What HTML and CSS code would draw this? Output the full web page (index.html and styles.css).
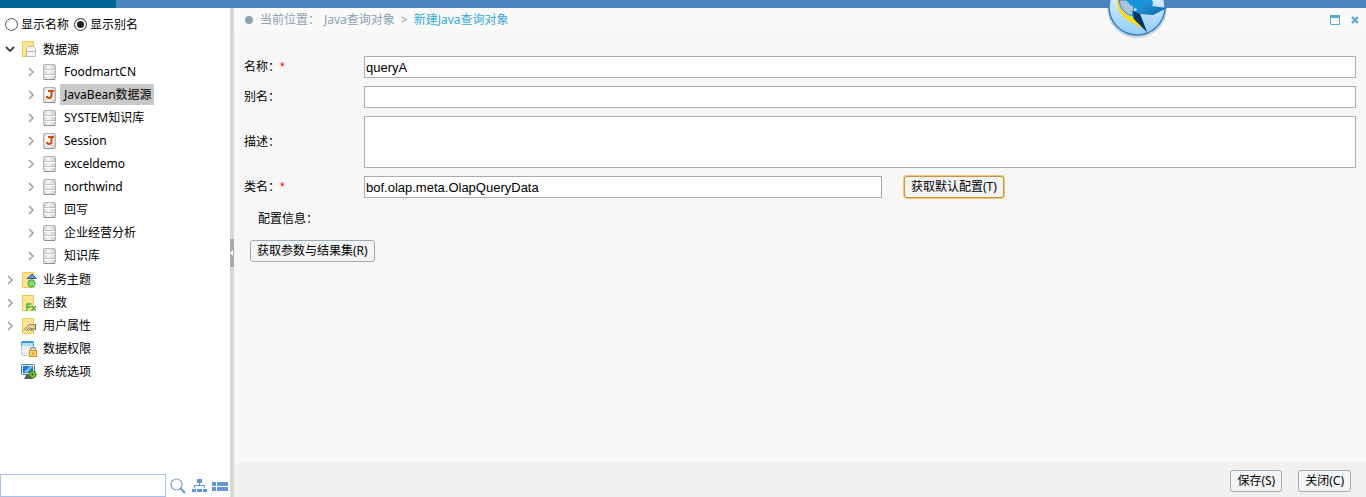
FILE: index.html
```
<!DOCTYPE html>
<html lang="zh-CN">
<head>
    <meta charset="UTF-8">
    <meta name="viewport" content="width=device-width, initial-scale=1.0">
    <title>新建Java查询对象</title>
    <link rel="stylesheet" href="styles.css">
</head>
<body>
    <!-- shared icons -->
    <svg class="icon-defs" aria-hidden="true">
        <defs>
            <linearGradient id="metal" x1="0" x2="1" y1="0" y2="0">
                <stop offset="0" stop-color="#cfcfcf"/>
                <stop offset="0.4" stop-color="#f7f7f7"/>
                <stop offset="1" stop-color="#cccccc"/>
            </linearGradient>
            <linearGradient id="sky" x1="0" x2="0" y1="0" y2="1">
                <stop offset="0" stop-color="#f4fbff"/>
                <stop offset="1" stop-color="#93cbf8"/>
            </linearGradient>
            <linearGradient id="wing" x1="0" x2="1" y1="0" y2="1">
                <stop offset="0" stop-color="#2ea4ea"/>
                <stop offset="1" stop-color="#00488e"/>
            </linearGradient>
        </defs>
        <symbol id="i-arrow" viewBox="0 0 10 10">
            <path d="M3 1 L7 5 L3 9" fill="none" stroke="#a5a5a5" stroke-width="1.7"/>
        </symbol>
        <symbol id="i-arrow-open" viewBox="0 0 10 10">
            <path d="M1 3 L5 7 L9 3" fill="none" stroke="#444" stroke-width="1.9"/>
        </symbol>
        <symbol id="i-db" viewBox="0 0 16 16">
            <rect x="1.5" y="0.5" width="12" height="15" rx="1.5" fill="url(#metal)" stroke="#b4b4b4"/>
            <path d="M2 5.5h11M2 10.5h11" stroke="#c4c4c4"/>
            <path d="M2 6.5h11M2 11.5h11" stroke="#fff"/>
            <path d="M2 15.5h11" stroke="#8e8e8e"/>
        </symbol>
        <symbol id="i-java" viewBox="0 0 16 16">
            <rect x="1.5" y="0.5" width="12" height="15" rx="1.5" fill="url(#metal)" stroke="#b4b4b4"/>
            <path d="M3 3h9v9H3z" fill="#f8f6f5"/>
            <path d="M2 15.5h11" stroke="#8e8e8e"/>
            <path d="M6 4h6M9.5 4v4.5q0 2.500-2.500 2.500q-2 0-2-2" fill="none" stroke="#cc4a0c" stroke-width="2"/>
        </symbol>
        <symbol id="i-folder" viewBox="0 0 16 16">
            <path d="M1.5 0.5h11v15h-11z" fill="#fde494" stroke="#efca4d"/>
        </symbol>
    </svg>

    <header class="topbar">
        <div class="topbar-active"></div>
        <svg class="logo" viewBox="0 0 64 40" aria-hidden="true">
            <ellipse cx="31" cy="8" rx="30" ry="30" fill="#6587a7" opacity="0.3"/>
            <circle cx="31" cy="7" r="28" fill="url(#sky)" stroke="#3c7fb9" stroke-width="1.500"/>
            <path d="M13 0Q13 10 21 15L31 19Q35 25 35 29Q30 24 23 21Q11 14 11 0Z" fill="#ffda08"/>
            <path d="M13 0Q14 12 26 16L28 6L20 0Z" fill="#a9c6e0" stroke="#3979b4"/>
            <path d="M20 0Q27 9 38 12Q50 6 46 0Z" fill="#1595de"/>
            <path d="M26 12Q34 10 38 1L46 6L61 8L47 15L34 14L41 32L27 18Z" fill="url(#wing)"/>
            <path d="M27 11L34 14L41 32L28 19Z" fill="#073662"/>
        </svg>
    </header>

    <div class="workspace">
        <aside class="sidebar">
            <div class="name-mode">
                <input type="radio" name="mode" id="mode-name"><label for="mode-name">显示名称</label>
                <input type="radio" name="mode" id="mode-alias" checked><label for="mode-alias">显示别名</label>
            </div>

            <ul class="tree">
                <li>
                    <div class="node root">
                        <svg class="arrow-open"><use href="#i-arrow-open"/></svg>
                        <svg class="icon" viewBox="0 0 16 16">
                            <use href="#i-folder"/>
                            <path d="M5.500 7.500L7.500 5.500h5l2 2v8h-9z" fill="#f5f5f5" stroke="#bbb"/>
                            <path d="M6 10.500h8" stroke="#bbb"/>
                        </svg>
                        <span class="text">数据源</span>
                    </div>
                    <ul>
                        <li class="node"><svg class="arrow"><use href="#i-arrow"/></svg><svg class="icon"><use href="#i-db"/></svg><span class="text">FoodmartCN</span></li>
                        <li class="node"><svg class="arrow"><use href="#i-arrow"/></svg><svg class="icon"><use href="#i-java"/></svg><span class="text selected">JavaBean数据源</span></li>
                        <li class="node"><svg class="arrow"><use href="#i-arrow"/></svg><svg class="icon"><use href="#i-db"/></svg><span class="text">SYSTEM知识库</span></li>
                        <li class="node"><svg class="arrow"><use href="#i-arrow"/></svg><svg class="icon"><use href="#i-java"/></svg><span class="text">Session</span></li>
                        <li class="node"><svg class="arrow"><use href="#i-arrow"/></svg><svg class="icon"><use href="#i-db"/></svg><span class="text">exceldemo</span></li>
                        <li class="node"><svg class="arrow"><use href="#i-arrow"/></svg><svg class="icon"><use href="#i-db"/></svg><span class="text">northwind</span></li>
                        <li class="node"><svg class="arrow"><use href="#i-arrow"/></svg><svg class="icon"><use href="#i-db"/></svg><span class="text">回写</span></li>
                        <li class="node"><svg class="arrow"><use href="#i-arrow"/></svg><svg class="icon"><use href="#i-db"/></svg><span class="text">企业经营分析</span></li>
                        <li class="node"><svg class="arrow"><use href="#i-arrow"/></svg><svg class="icon"><use href="#i-db"/></svg><span class="text">知识库</span></li>
                    </ul>
                </li>
                <li class="node">
                    <svg class="arrow"><use href="#i-arrow"/></svg>
                    <svg class="icon" viewBox="0 0 16 16">
                        <use href="#i-folder"/>
                        <path d="M6 6.500L11 2L15.500 6.500z" fill="#6290df" stroke="#3457a0"/>
                        <circle cx="10.500" cy="11.500" r="3.700" fill="#80d96b" stroke="#4aa03c"/>
                    </svg>
                    <span class="text">业务主题</span>
                </li>
                <li class="node">
                    <svg class="arrow"><use href="#i-arrow"/></svg>
                    <svg class="icon" viewBox="0 0 16 16">
                        <use href="#i-folder"/>
                        <path d="M6 15.500V9h4.500M6 12h4M10.500 11l4.500 4.500M15 11l-4.500 4.500" fill="none" stroke="#3aae35" stroke-width="1.500"/>
                    </svg>
                    <span class="text">函数</span>
                </li>
                <li class="node">
                    <svg class="arrow"><use href="#i-arrow"/></svg>
                    <svg class="icon" viewBox="0 0 16 16">
                        <use href="#i-folder"/>
                        <path d="M3 12l5-5h6v4l-4 1z" fill="#f4d08a"/>
                        <path d="M2.500 12.500L8 6.500h6M5 13l3.500-3.500L13 13M7 13l2-2 2 2M10 10.500l4 .5" fill="none" stroke="#8a8770"/>
                        <path d="M14.500 6v6" stroke="#47733a"/>
                    </svg>
                    <span class="text">用户属性</span>
                </li>
                <li class="node leaf">
                    <svg class="icon" viewBox="0 0 16 16">
                        <rect x="0.500" y="0.500" width="12" height="14" rx="1" fill="#e9ebee" stroke="#c5c8cc"/>
                        <path d="M0 1.500Q0 0 2 0h9q2 0 2 1.500V5H0z" fill="#3c94e8"/>
                        <path d="M1 3.500h11" stroke="#b5ddff" stroke-width="3"/>
                        <path d="M0 10h12M6.500 6v9" stroke="#fff"/>
                        <path d="M9.500 10V8q0-1.500 2.500-1.500T14.500 8v2" fill="none" stroke="#999" stroke-width="1.300"/>
                        <rect x="8.500" y="9.500" width="7" height="6" fill="#fbd25a" stroke="#d2942b"/>
                        <path d="M12 11.500v2" stroke="#9a6a15"/>
                    </svg>
                    <span class="text">数据权限</span>
                </li>
                <li class="node leaf">
                    <svg class="icon" viewBox="0 0 16 16">
                        <rect x="0.500" y="0.500" width="13" height="10" rx="1" fill="#dce8f2" stroke="#57799b"/>
                        <path d="M2 2h10v7H2z" fill="#147fd5"/>
                        <path d="M3 8l6-6h3L6 9z" fill="#76c2f5"/>
                        <path d="M5 11h4v2h2v2H3z" fill="#56636e"/>
                        <path d="M11.500 6v9M7 10.500h9M8.500 7.500l6 6M14.500 7.500l-6 6" stroke="#4c9412" stroke-width="1.500"/>
                        <circle cx="11.500" cy="10.500" r="3" fill="#9bd936" stroke="#397911"/>
                        <circle cx="11.500" cy="10.500" r="1.200" fill="#285b0c"/>
                    </svg>
                    <span class="text">系统选项</span>
                </li>
            </ul>

            <div class="search">
                <input type="text" aria-label="搜索">
                <button type="button" aria-label="查找">
                    <svg viewBox="0 0 16 16">
                        <circle cx="6.500" cy="6.500" r="5.500" fill="#fff" stroke="#7d9bd0" stroke-width="1.200"/>
                        <path d="M10.500 10.500l4.500 4.500" stroke="#6990d0" stroke-width="2"/>
                    </svg>
                </button>
                <button type="button" aria-label="树形" class="wide">
                    <svg viewBox="0 0 16 16" fill="#6196d8">
                        <path d="M5 1h5v4H8v2h5v3h-1V8H3v2H2V7h5V5H5zM0 11h4v3H0zM5 11h5v3H5zM11 11h4v3h-4z"/>
                    </svg>
                </button>
                <button type="button" aria-label="列表">
                    <svg viewBox="0 0 16 16" fill="#6196d8">
                        <path d="M0 4h4v4H0zM5 4h11v4H5zM0 9h4v4H0zM5 9h11v4H5z"/>
                    </svg>
                </button>
            </div>
        </aside>

        <div class="splitter"><button type="button" aria-label="收起"></button></div>

        <main class="content">
            <nav class="crumbs">
                <span class="dot"></span>
                <span>当前位置：</span>
                <a href="#">Java查询对象</a>
                <span class="sep">&gt;</span>
                <a href="#" class="current">新建Java查询对象</a>
                <div class="window-tools">
                    <button type="button" aria-label="最大化"><svg viewBox="0 0 10 10"><path d="M0.500 1v8.500h9V1" fill="none" stroke="#56acd0"/><path d="M0 1.500h10" stroke="#56acd0" stroke-width="3"/></svg></button>
                    <button type="button" aria-label="关闭窗口"><svg viewBox="0 0 10 10"><path d="M2 2l6 6M8 2l-6 6" stroke="#56acd0" stroke-width="2.200"/></svg></button>
                </div>
            </nav>

            <form class="query-form">
                <div class="row">
                    <label for="name">名称：<em>*</em></label>
                    <input type="text" id="name" value="queryA">
                </div>
                <div class="row">
                    <label for="alias">别名：</label>
                    <input type="text" id="alias">
                </div>
                <div class="row">
                    <label for="desc">描述：</label>
                    <textarea id="desc"></textarea>
                </div>
                <div class="row class-row">
                    <label for="class">类名：<em>*</em></label>
                    <input type="text" id="class" value="bof.olap.meta.OlapQueryData">
                    <div class="row-action"><button type="button" class="btn focused">获取默认配置(T)</button></div>
                </div>
                <p class="config-title">配置信息：</p>
                <button type="button" class="btn params">获取参数与结果集(R)</button>
            </form>

            <footer class="actions">
                <button type="button" class="btn">保存(S)</button>
                <button type="button" class="btn">关闭(C)</button>
            </footer>
        </main>
    </div>
</body>
</html>
```
FILE: styles.css
```
* {
    box-sizing: border-box;
}
body {
    margin: 0;
    height: 100vh;
    display: flex;
    flex-direction: column;
    font-family: "Noto Sans", "Noto Sans CJK SC", sans-serif;
    font-size: 12px;
    line-height: 18px;
    color: #000;
    background-color: #fff;
}
button, input, textarea {
    font: inherit;
    margin: 0;
}
.icon-defs {
    position: absolute;
    width: 0;
    height: 0;
}

/* top strip */
.topbar {
    position: relative;
    height: 8px;
    flex: none;
    background-color: #4b84be;
}
.topbar-active {
    width: 116px;
    height: 8px;
    background-color: #006699;
}
.logo {
    position: absolute;
    top: 0;
    right: 196px;
    width: 64px;
    height: 40px;
}
.workspace {
    flex: 1;
    min-height: 0;
    display: flex;
}

/* sidebar */
.sidebar {
    width: 230px;
    flex: none;
    display: flex;
    flex-direction: column;
}
.name-mode {
    display: flex;
    align-items: center;
    height: 30px;
    padding: 2px 0 0 5px;
}
.name-mode input {
    appearance: none;
    width: 13px;
    height: 13px;
    border: 1px solid #555;
    border-radius: 50%;
    background-color: #fff;
}
.name-mode input:checked {
    background-color: #222;
    box-shadow: inset 0 0 0 2px #fff;
}
.name-mode label {
    margin: 2px 5px 0 3px;
}
.tree, .tree ul {
    list-style: none;
    margin: 0;
    padding: 0;
}
.tree {
    flex: 1;
    overflow: auto;
}
.tree ul {
    padding: 0 0 1px 21px;
}
.node {
    display: flex;
    align-items: center;
    height: 23px;
    padding-left: 5px;
}
.node.root {
    height: 22px;
}
.node.leaf {
    padding-left: 21px;
}
.arrow, .arrow-open {
    width: 10px;
    height: 10px;
    margin-right: 6px;
    flex: none;
}
.icon {
    width: 16px;
    height: 16px;
    flex: none;
}
.text {
    height: 21px;
    line-height: 21px;
    padding: 0 2px 0 4px;
    margin-left: 2px;
    white-space: nowrap;
}
.selected {
    background-color: #c8c8c8;
}
.search {
    display: flex;
    align-items: center;
    gap: 4px;
    height: 23px;
    padding-right: 2px;
}
.search input {
    flex: 1;
    min-width: 0;
    height: 23px;
    border: 1px solid #a8c0e8;
}
.search button {
    width: 16px;
    height: 16px;
    padding: 0;
    border: 0;
    background: none;
}
.search .wide {
    margin-left: 2px;
}
.search svg {
    display: block;
    width: 16px;
    height: 16px;
}

/* drag bar */
.splitter {
    width: 4px;
    flex: none;
    display: flex;
    align-items: center;
    background-color: #d9d8d2;
}
.splitter button {
    width: 4px;
    height: 28px;
    padding: 0;
    border: 0;
    background-color: #aaa;
}
.splitter button::before {
    content: "";
    display: block;
    width: 0;
    border: 3px solid transparent;
    border-left-width: 0;
    border-right-color: #fff;
}

/* content */
.content {
    flex: 1;
    min-width: 0;
    display: flex;
    flex-direction: column;
    background-color: #f7f7f7;
}
.crumbs {
    display: flex;
    align-items: center;
    height: 23px;
    padding: 0 6px 0 11px;
    color: #8ba2af;
    background-color: #fafaf8;
}
.crumbs a {
    color: inherit;
    text-decoration: none;
}
.crumbs a.current {
    color: #36a9dc;
}
.dot {
    width: 8px;
    height: 8px;
    margin-right: 7px;
    border-radius: 50%;
    background-color: #8ba2af;
}
.crumbs a:first-of-type {
    margin-left: 4px;
}
.sep {
    margin: 0 6px;
}
.window-tools {
    display: flex;
    gap: 10px;
    margin-left: auto;
}
.window-tools button {
    width: 10px;
    height: 10px;
    padding: 0;
    border: 0;
    background: none;
}
.window-tools svg {
    display: block;
    width: 10px;
    height: 10px;
}
.query-form {
    flex: 1;
    padding: 25px 10px 0;
}
.row {
    display: flex;
    align-items: center;
    margin-bottom: 8px;
}
.row label {
    width: 120px;
    flex: none;
}
.row em {
    color: #f00;
    font-family: "Liberation Sans", Arial, sans-serif;
    font-style: normal;
}
.row input, .row textarea {
    flex: 1;
    min-width: 0;
    height: 22px;
    padding: 1px;
    border: 1px solid #a9abb3;
    background-color: #fff;
    font-family: "Liberation Sans", Arial, sans-serif;
    font-size: 13px;
}
.row textarea {
    height: 52px;
    resize: none;
}
.class-row input {
    flex: 516;
}
.row-action {
    flex: 454;
    margin-left: 22px;
    line-height: 22px;
}
.btn {
    height: 22px;
    padding: 0 6px;
    line-height: 18px;
    border: 1px solid #9aabb9;
    border-radius: 3px;
    background-color: #f4f4f4;
    color: #000;
}
.btn.focused {
    border-color: #c8963e;
    box-shadow: 0 0 0 1px #f3c56f;
}
.config-title {
    margin: 12px 0 12px 14px;
}
.params {
    display: block;
    margin-left: 6px;
}
.actions {
    display: flex;
    justify-content: flex-end;
    gap: 16px;
    height: 34px;
    padding: 7px 15px 0 0;
    background-color: #f0f0f0;
}
```
